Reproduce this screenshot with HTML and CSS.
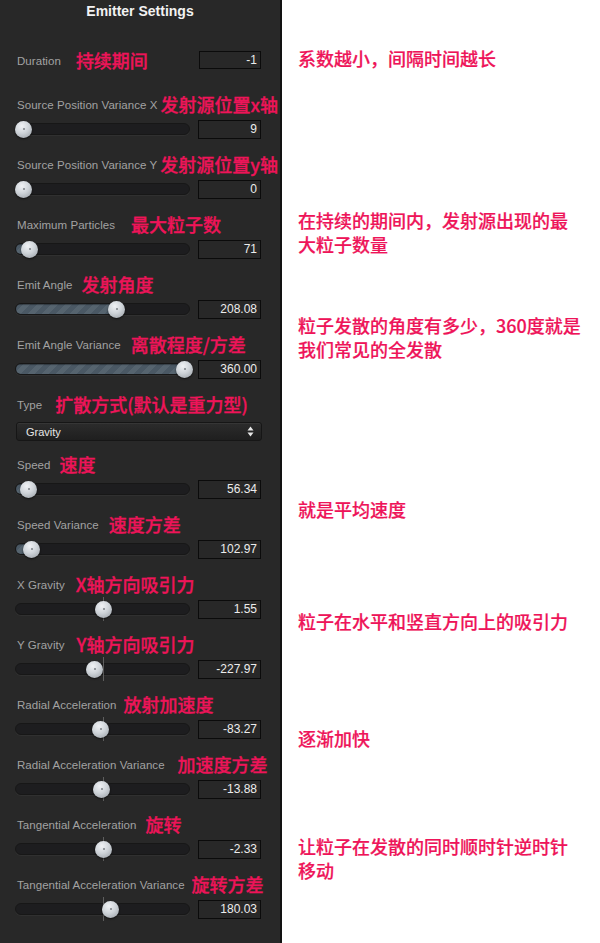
FILE: index.html
```html
<!DOCTYPE html>
<html lang="zh">
<head>
<meta charset="utf-8">
<title>Emitter Settings</title>
<link rel="stylesheet" href="styles.css">
</head>
<body>
<div class="page">
  <div class="panel">
    <div class="title">Emitter Settings</div>

    <div class="duration">
      <span class="label">Duration</span><span class="anno g16">持续期间</span>
      <div class="num num-d">-1</div>
    </div>

    <div class="row">
      <div class="head"><span class="label">Source Position Variance X</span><span class="anno g3">发射源位置x轴</span></div>
      <div class="ctrl">
        <div class="slider"><div class="track"><div class="fill" style="width:8px"></div></div><div class="knob" style="left:0px"></div></div>
        <div class="num">9</div>
      </div>
    </div>

    <div class="row">
      <div class="head"><span class="label">Source Position Variance Y</span><span class="anno g3">发射源位置y轴</span></div>
      <div class="ctrl">
        <div class="slider"><div class="track"><div class="fill" style="width:8px"></div></div><div class="knob" style="left:0px"></div></div>
        <div class="num">0</div>
      </div>
    </div>

    <div class="row">
      <div class="head"><span class="label">Maximum Particles</span><span class="anno g17">最大粒子数</span></div>
      <div class="ctrl">
        <div class="slider"><div class="track"><div class="fill" style="width:14px"></div></div><div class="knob" style="left:6px"></div></div>
        <div class="num">71</div>
      </div>
    </div>

    <div class="row">
      <div class="head"><span class="label">Emit Angle</span><span class="anno g9">发射角度</span></div>
      <div class="ctrl">
        <div class="slider"><div class="track"><div class="fill" style="width:101px"></div></div><div class="knob" style="left:93px"></div></div>
        <div class="num">208.08</div>
      </div>
    </div>

    <div class="row">
      <div class="head"><span class="label">Emit Angle Variance</span><span class="anno g10">离散程度/方差</span></div>
      <div class="ctrl">
        <div class="slider"><div class="track"><div class="fill" style="width:175px"></div></div><div class="knob" style="left:161px"></div></div>
        <div class="num">360.00</div>
      </div>
    </div>

    <div class="row">
      <div class="head"><span class="label">Type</span><span class="anno g13">扩散方式(默认是重力型)</span></div>
      <div class="select">
        <span>Gravity</span>
        <svg class="updown" width="7" height="11" viewBox="0 0 7 11"><path d="M3.5 0.5 L6.5 4.5 H0.5 Z M3.5 10.5 L6.5 6.5 H0.5 Z" fill="#e8e8e8"/></svg>
      </div>
    </div>

    <div class="row">
      <div class="head"><span class="label">Speed</span><span class="anno g9">速度</span></div>
      <div class="ctrl">
        <div class="slider"><div class="track"><div class="fill" style="width:13px"></div></div><div class="knob" style="left:5px"></div></div>
        <div class="num">56.34</div>
      </div>
    </div>

    <div class="row">
      <div class="head"><span class="label">Speed Variance</span><span class="anno g10">速度方差</span></div>
      <div class="ctrl">
        <div class="slider"><div class="track"><div class="fill" style="width:16px"></div></div><div class="knob" style="left:8px"></div></div>
        <div class="num">102.97</div>
      </div>
    </div>

    <div class="row">
      <div class="head"><span class="label">X Gravity</span><span class="anno g11">X轴方向吸引力</span></div>
      <div class="ctrl">
        <div class="slider"><div class="track"></div><div class="tick"></div><div class="knob" style="left:80px"></div></div>
        <div class="num">1.55</div>
      </div>
    </div>

    <div class="row">
      <div class="head"><span class="label">Y Gravity</span><span class="anno g12">Y轴方向吸引力</span></div>
      <div class="ctrl">
        <div class="slider"><div class="track"></div><div class="tick"></div><div class="knob" style="left:71px"></div></div>
        <div class="num">-227.97</div>
      </div>
    </div>

    <div class="row">
      <div class="head"><span class="label">Radial Acceleration</span><span class="anno g7">放射加速度</span></div>
      <div class="ctrl">
        <div class="slider"><div class="track"></div><div class="tick"></div><div class="knob" style="left:77px"></div></div>
        <div class="num">-83.27</div>
      </div>
    </div>

    <div class="row">
      <div class="head"><span class="label">Radial Acceleration Variance</span><span class="anno g13">加速度方差</span></div>
      <div class="ctrl">
        <div class="slider"><div class="track"></div><div class="tick"></div><div class="knob" style="left:78px"></div></div>
        <div class="num">-13.88</div>
      </div>
    </div>

    <div class="row">
      <div class="head"><span class="label">Tangential Acceleration</span><span class="anno g9">旋转</span></div>
      <div class="ctrl">
        <div class="slider"><div class="track"></div><div class="tick"></div><div class="knob" style="left:80px"></div></div>
        <div class="num">-2.33</div>
      </div>
    </div>

    <div class="row">
      <div class="head"><span class="label">Tangential Acceleration Variance</span><span class="anno g7">旋转方差</span></div>
      <div class="ctrl">
        <div class="slider"><div class="track"></div><div class="tick"></div><div class="knob" style="left:87px"></div></div>
        <div class="num">180.03</div>
      </div>
    </div>
  </div>

  <div class="notes">
    <p class="note n1">系数越小，间隔时间越长</p>
    <p class="note n2">在持续的期间内，发射源出现的最<br>大粒子数量</p>
    <p class="note n3">粒子发散的角度有多少，360度就是<br>我们常见的全发散</p>
    <p class="note n4">就是平均速度</p>
    <p class="note n5">粒子在水平和竖直方向上的吸引力</p>
    <p class="note n6">逐渐加快</p>
    <p class="note n7">让粒子在发散的同时顺时针逆时针<br>移动</p>
  </div>
</div>
</body>
</html>
```

FILE: styles.css
```css
html, body {
  margin: 0;
  padding: 0;
  background: #ffffff;
}

body {
  font-family: "Liberation Sans", Arial, "Noto Sans CJK SC", sans-serif;
}

.page {
  display: flex;
  width: 600px;
  height: 943px;
  overflow: hidden;
}

.panel {
  width: 280px;
  flex: none;
  background: #282828;
  border-right: 2px solid #121212;
  display: flex;
  flex-direction: column;
}

.title {
  height: 22px;
  line-height: 22px;
  text-align: center;
  color: #f2f2f2;
  font-size: 14px;
  font-weight: bold;
}

.duration {
  margin-top: 29px;
  height: 44px;
  display: flex;
  align-items: flex-start;
  padding-left: 17px;
}

.duration .label,
.duration .anno {
  height: 20px;
  line-height: 20px;
}

.duration .anno {
  margin-top: -1px;
}

.label {
  color: #a2a2a2;
  font-size: 11.5px;
  letter-spacing: 0.05px;
  white-space: nowrap;
}

.anno {
  color: #ee1459;
  font-family: "Noto Sans CJK SC", sans-serif;
  font-weight: 500;
  font-size: 18px;
  line-height: 20px;
  white-space: nowrap;
  -webkit-text-stroke: 0.3px #ee1459;
}

.head .anno {
  margin-bottom: 2px;
}

.g3 { margin-left: 3px; }
.g7 { margin-left: 7px; }
.g9 { margin-left: 9px; }
.g10 { margin-left: 10px; }
.g11 { margin-left: 11px; }
.g12 { margin-left: 12px; }
.g13 { margin-left: 13px; }
.g16 { margin-left: 15px; }
.g17 { margin-left: 16px; }

.num {
  box-sizing: border-box;
  width: 63px;
  height: 19px;
  border: 1px solid #0b0b0b;
  background: #282828;
  color: #ececec;
  font-size: 12px;
  line-height: 17px;
  text-align: right;
  padding-right: 3px;
}

.num-d {
  margin-left: auto;
  margin-right: 19px;
  width: 62px;
  height: 18px;
  line-height: 16px;
}

.row {
  height: 60px;
  display: flex;
  flex-direction: column;
}

.head {
  height: 20px;
  display: flex;
  align-items: center;
  padding-left: 17px;
}

.ctrl {
  margin-top: 4px;
  height: 20px;
  display: flex;
  align-items: center;
  padding-left: 15px;
}

.slider {
  position: relative;
  width: 175px;
  height: 20px;
  display: flex;
  align-items: center;
  margin-right: 8px;
}

.track {
  position: relative;
  box-sizing: border-box;
  width: 175px;
  height: 12px;
  border-radius: 6px;
  background: #1d1d1f;
  border: 1px solid #171717;
  box-shadow: 0 1px 0 rgba(255, 255, 255, 0.04);
  overflow: hidden;
}

.fill {
  position: absolute;
  left: 0;
  top: 0;
  bottom: 0;
  background: repeating-linear-gradient(135deg, #4a5864 0px, #4a5864 5px, #56646f 5px, #56646f 10px);
  box-shadow: inset 0 1px 1px rgba(0, 0, 0, 0.35);
}

.tick {
  position: absolute;
  left: 88px;
  top: -2px;
  width: 1px;
  height: 24px;
  background: #5e5e5e;
}

.knob {
  position: absolute;
  top: 1.5px;
  width: 17px;
  height: 17px;
  border-radius: 50%;
  background: radial-gradient(circle at 40% 30%, #f0f2f5 0%, #cfd4d9 45%, #959ba2 100%);
  box-shadow: 0 1px 2px rgba(0, 0, 0, 0.6);
}

.knob::after {
  content: "";
  position: absolute;
  left: 7.5px;
  top: 7.5px;
  width: 2px;
  height: 2px;
  border-radius: 50%;
  background: #7a7f84;
}

.select {
  box-sizing: border-box;
  margin: 7px 18px 0 16px;
  height: 19px;
  border-radius: 3px;
  border: 1px solid #161616;
  background: linear-gradient(#2c2c2c, #1f1f1f);
  box-shadow: inset 0 1px 0 rgba(255, 255, 255, 0.05);
  display: flex;
  align-items: center;
  justify-content: space-between;
  padding: 0 7px 0 9px;
  color: #e6e6e6;
  font-size: 11px;
}

.updown {
  display: block;
}

.notes {
  flex: 1;
  background: #ffffff;
  padding-left: 16px;
  display: flex;
  flex-direction: column;
}

.note {
  margin: 0;
  color: #ee1459;
  font-family: "Noto Sans CJK SC", sans-serif;
  font-weight: 500;
  font-size: 18px;
  line-height: 24px;
  white-space: nowrap;
  -webkit-text-stroke: 0.2px #ee1459;
}

.n1 { margin-top: 46px; }
.n2 { margin-top: 138px; }
.n3 { margin-top: 57px; }
.n4 { margin-top: 136px; }
.n5 { margin-top: 88px; }
.n6 { margin-top: 93px; }
.n7 { margin-top: 84px; }
```
